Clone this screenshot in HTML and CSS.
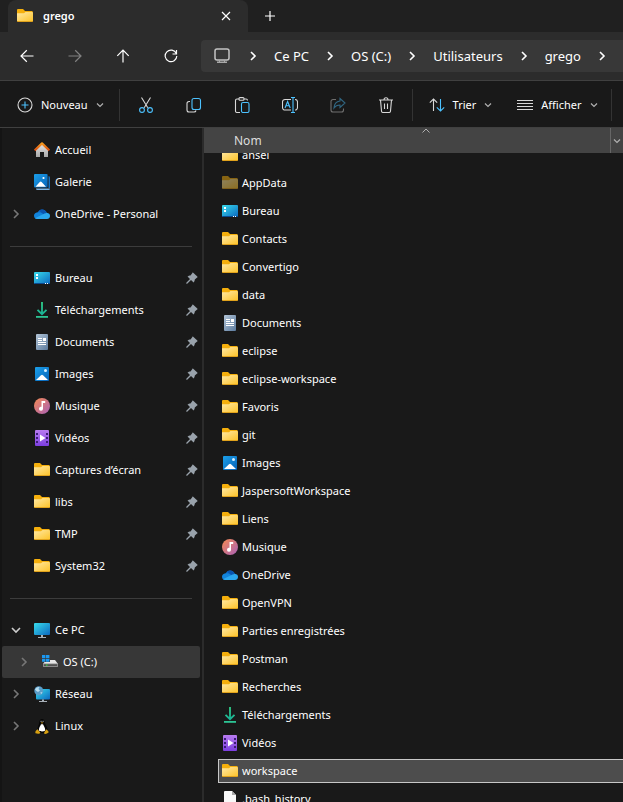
FILE: index.html
```html
<!DOCTYPE html>
<html lang="fr">
<head>
<meta charset="UTF-8">
<meta name="viewport" content="width=device-width, initial-scale=1.0">
<title>grego</title>
<link rel="stylesheet" href="styles.css">
</head>
<body>

<svg class="sprite" aria-hidden="true">
    <defs>
        <linearGradient id="gFolder" x1="0" y1="0" x2="1" y2="1"><stop offset="0" stop-color="#ffe9a6"/><stop offset="1" stop-color="#fdc42c"/></linearGradient>
        <linearGradient id="gDesk" x1="0" y1="0" x2="1" y2="1"><stop offset="0" stop-color="#38dcec"/><stop offset="1" stop-color="#0c68c0"/></linearGradient>
        <linearGradient id="gBlue" x1="0" y1="0" x2="1" y2="1"><stop offset="0" stop-color="#1ba0ea"/><stop offset="1" stop-color="#0763b8"/></linearGradient>
        <linearGradient id="gDown" x1="0" y1="0" x2="0" y2="16" gradientUnits="userSpaceOnUse"><stop offset="0" stop-color="#30d088"/><stop offset="1" stop-color="#12a89a"/></linearGradient>
        <linearGradient id="gDoc" x1="0" y1="0" x2="1" y2="1"><stop offset="0" stop-color="#b4c6d8"/><stop offset="1" stop-color="#5a7a9e"/></linearGradient>
        <linearGradient id="gMusic" x1="0" y1="0" x2="1" y2="1"><stop offset="0" stop-color="#f58a52"/><stop offset="1" stop-color="#a860b8"/></linearGradient>
        <linearGradient id="gVideo" x1="0" y1="0" x2="0" y2="1"><stop offset="0" stop-color="#b87cf0"/><stop offset="1" stop-color="#7c3ee0"/></linearGradient>
        <linearGradient id="gHome" x1="0" y1="0" x2="0" y2="1"><stop offset="0" stop-color="#e4e4e4"/><stop offset="1" stop-color="#a8a8a8"/></linearGradient>
        <linearGradient id="gRoof" x1="0" y1="0" x2="0" y2="1"><stop offset="0" stop-color="#f59a20"/><stop offset="1" stop-color="#d84c10"/></linearGradient>
    </defs>
    <symbol id="folder" viewBox="0 0 16 16">
        <path fill="#f5af0c" d="M0 2a1 1 0 0 1 1-1h5l2 2h7.500v10H0z"/>
        <path fill="url(#gFolder)" d="M0 5.300h7L8.500 4H15.200a.8.800 0 0 1 .8.800V13H0z"/>
        <path fill="#e0a21c" d="M0 13h16v.3a.7.700 0 0 1-.7.700H.7a.7.700 0 0 1-.7-.7z"/>
    </symbol>
    <symbol id="desktop" viewBox="0 0 16 16">
        <rect y="2" width="16" height="12" rx="1" fill="url(#gDesk)"/>
        <path fill="#0a4a90" d="M0 13h16a1 1 0 0 1-1 1H1a1 1 0 0 1-1-1z"/>
        <path fill="#fff" d="M2 4h2v2H2zM2 7h2v2H2zM11 13h1v1h-1zM13 13h1v1h-1z"/>
    </symbol>
    <symbol id="download" viewBox="0 0 16 16">
        <path fill="none" stroke="url(#gDown)" stroke-width="1.800" d="M8 0V12M3.500 7.800 8 12.200l4.500-4.400"/>
        <path fill="#2cc494" d="M2 14h12v1.800H2z"/>
    </symbol>
    <symbol id="document" viewBox="0 0 16 16">
        <rect x="2" width="12" height="16" rx="1" fill="url(#gDoc)"/>
        <path fill="#fff" d="M4 4h4v1H4zM4 6h4v1H4zM9 4h3v3H9zM4 8h8v1H4zM4 10h8v1H4z"/>
    </symbol>
    <symbol id="pictures" viewBox="0 0 16 16">
        <rect x="1" y="1" width="14" height="14" rx="1" fill="url(#gBlue)"/>
        <path fill="#fff" d="M2 14 7 9.300a1.400 1.400 0 0 1 2 0L14 14z"/>
        <circle cx="11.500" cy="4.500" r="1.500" fill="#d8f0ff"/>
    </symbol>
    <symbol id="gallery" viewBox="0 0 16 16">
        <path fill="#1473c4" d="M14.500 2a1.500 1.500 0 0 1 1.500 1.500V14h-1.500z"/>
        <path fill="#7ab4e4" d="M2 14.500h14A1.500 1.500 0 0 1 14.500 16h-11A1.500 1.500 0 0 1 2 14.500z"/>
        <rect width="13.600" height="13.600" rx="1" fill="url(#gBlue)"/>
        <path fill="#fff" d="M1.500 12.800 5.800 8a1.200 1.200 0 0 1 1.800 0l4.400 4.800z"/>
        <circle cx="9.500" cy="4" r="1.100" fill="#fff"/>
    </symbol>
    <symbol id="music" viewBox="0 0 16 16">
        <circle cx="8" cy="8" r="8" fill="url(#gMusic)"/>
        <path fill="#fff" d="M7.500 3h3.700v2H9v5.700a2 2 0 1 1-1.500-1.900z"/>
    </symbol>
    <symbol id="video" viewBox="0 0 16 16">
        <rect x="1" width="14" height="16" rx="1" fill="url(#gVideo)"/>
        <path fill="#3c1c78" d="M2 3h2v2H2zM2 7h2v2H2zM2 11h2v2H2zM12 3h2v2h-2zM12 7h2v2h-2zM12 11h2v2h-2z"/>
        <path fill="#fff" d="M6 4.500 11.500 8 6 11.500z"/>
    </symbol>
    <symbol id="home" viewBox="0 0 16 16">
        <path fill="url(#gHome)" d="M2 7.500 8 2l6 5.500V15H10V10H6v5H2z"/>
        <path fill="none" stroke="url(#gRoof)" stroke-width="2.200" stroke-linejoin="round" d="M.6 8.400 8 1.400l7.400 7"/>
    </symbol>
    <symbol id="onedrive" viewBox="0 0 16 16">
        <path fill="#0f6cc8" d="M3.600 6.300A5 5 0 0 1 12.700 6.800L8 10z"/>
        <path fill="#0a55b0" d="M5 4.400a5 5 0 0 1 7.700 2.400L9 8z"/>
        <path fill="#1284dc" d="M3.600 6.200C1.200 6.400 0 8 0 9.800 0 12 1.700 13 3.200 13L9.500 8.200C7.500 6.800 5.800 6 3.600 6.200z"/>
        <path fill="#2ba8f0" d="M1 12.200 9.500 8l3.200-1.200C15 7 16 8.500 16 10c0 1.800-1.400 3-3 3H3.200c-.9 0-1.600-.3-2.200-.8z"/>
    </symbol>
    <symbol id="pc" viewBox="0 0 16 16">
        <rect y="1" width="16" height="12" rx="1" fill="url(#gDesk)"/>
        <path fill="#a8b0b8" d="M7 13h2v2h3v1H4v-1h3z"/>
    </symbol>
    <symbol id="drive" viewBox="0 0 16 16">
        <path fill="#e6e6e6" d="M4 6h9l3 4H1z"/>
        <rect x="1" y="9.500" width="15" height="3.500" rx=".6" fill="#8a8a8a"/>
        <path fill="#505050" d="M2 10.300h13v1.700H2z"/>
        <path fill="#30d840" d="M4 10.600h1.500v1.200H4z"/>
        <path fill="#373737" d="M0 0h8v8H0z"/>
        <path fill="#1c98f0" d="M0 1h3.400v3H0zM4 1h3.400v3H4zM0 4.700h3.400v3H0zM4 4.700h3.400v3H4z"/>
    </symbol>
    <symbol id="network" viewBox="0 0 16 16">
        <rect x="2" y="3" width="14" height="10.500" rx="1" fill="url(#gDesk)"/>
        <path fill="#a8b0b8" d="M8 13.500h2V15h3v1H5v-1h3z"/>
        <circle cx="4.800" cy="4.800" r="4.500" fill="#5a9cc8"/>
        <path fill="#b8dcee" d="M1 3.500C2 1.500 4 .8 5.500 1L4.500 3 6 4.500 4 6 2.500 5zM6.500 6l2 .5L7 8.300z"/>
    </symbol>
    <symbol id="linux" viewBox="0 0 16 16">
        <path fill="#050505" d="M5.500 3a2.600 2.600 0 0 1 5 0c.2 3 3 5.500 3 8.500S11 15 8 15s-5-1-4.500-4S5.400 6 5.500 3z"/>
        <path fill="#fff" d="M7 6.200h2c1 2 2.400 4 2.200 6-.3 1.600-5.800 1.600-6.300 0C4.700 10 6.200 8 7 6.200z"/>
        <path fill="#888" d="M6.500 2.800h1.200V4H6.500zM8.500 2.800h1.200V4H8.500z"/>
        <path fill="#d8a010" d="M6.700 4.400h2.800L8 5.800zM3.500 11.200l2.800 3.300c0 1.300-2.500 1.700-4.800.8-.6-2 .6-2.500 2-4.100zM12.200 11.200c1 1 2.800 2 2.300 3.300-1.500 1.500-4.200 2-4.500.6z"/>
    </symbol>
    <symbol id="file" viewBox="0 0 16 16">
        <path fill="#f8f8f8" d="M2 1a1 1 0 0 1 1-1h7l4 4v12H2z"/>
        <path fill="#a8a8a8" d="M10 0l4 4h-4z"/>
    </symbol>
    <symbol id="pin" viewBox="0 0 12 12">
        <path fill="#99a2ab" d="M7.200.8 11.300 4.600c.5.500.2 1.200-.5 1.200L8.800 7.500C8.700 9 8.200 10 7.600 10.400L5 8 1.200 11.700H.3v-.9L4 7.100 1.500 4.600C2.200 3.900 3.400 3.500 4.500 3.500L6.200 1.200C6.300.5 6.800.4 7.200.8z"/>
    </symbol>
    <symbol id="right" viewBox="0 0 8 12">
        <path fill="none" stroke="currentColor" stroke-width="1.600" d="M2 2l4 4-4 4"/>
    </symbol>
    <symbol id="down" viewBox="0 0 8 8">
        <path fill="none" stroke="currentColor" stroke-width="1.200" d="M1 2.500l3 3 3-3"/>
    </symbol>
</svg>

<div class="window">
    <header class="tabs">
        <div class="tab">
            <svg class="icon"><use href="#folder"/></svg>
            <span class="tab-title">grego</span>
            <button type="button" class="tab-close" aria-label="Fermer l'onglet">
                <svg width="10" height="10" viewBox="0 0 10 10"><path d="M1 1l8 8M9 1l-8 8"/></svg>
            </button>
        </div>
        <button type="button" class="tab-new" aria-label="Nouvel onglet">
            <svg width="12" height="12" viewBox="0 0 12 12"><path d="M6 1v10M1 6h10"/></svg>
        </button>
    </header>

    <nav class="navbar">
        <button type="button" class="nav-button" aria-label="Précédent">
            <svg width="14" height="14" viewBox="0 0 14 14"><path d="M13.500 7H1M6.800 1.300 1 7l5.800 5.700"/></svg>
        </button>
        <button type="button" class="nav-button" aria-label="Suivant" disabled>
            <svg width="14" height="14" viewBox="0 0 14 14"><path d="M.5 7H13M7.200 1.300 13 7l-5.800 5.700"/></svg>
        </button>
        <button type="button" class="nav-button" aria-label="Dossier parent">
            <svg width="14" height="14" viewBox="0 0 14 14"><path d="M7 13.500V1M1.300 6.800 7 1l5.700 5.800"/></svg>
        </button>
        <button type="button" class="nav-button" aria-label="Actualiser">
            <svg width="14" height="14" viewBox="0 0 14 14"><path d="M12.300 4.500A5.800 5.800 0 1 0 12.800 7M12.500 1v4H8.500"/></svg>
        </button>
        <div class="address">
            <svg class="address-icon" viewBox="0 0 16 16"><rect x="1" y="1" width="14" height="11" rx="2" fill="none" stroke="#c4c4c4" stroke-width="1.500"/><path fill="#a8a8a8" d="M3 13.500h10V15H3zM5 12h1v2H5zM10 12h1v2h-1z"/></svg>
            <svg class="crumb-arrow"><use href="#right"/></svg>
            <a href="#">Ce PC</a>
            <svg class="crumb-arrow"><use href="#right"/></svg>
            <a href="#">OS (C:)</a>
            <svg class="crumb-arrow"><use href="#right"/></svg>
            <a href="#">Utilisateurs</a>
            <svg class="crumb-arrow"><use href="#right"/></svg>
            <a href="#">grego</a>
            <svg class="crumb-arrow"><use href="#right"/></svg>
        </div>
    </nav>

    <div class="toolbar">
        <button type="button" class="tool new">
            <svg class="icon" viewBox="0 0 16 16"><circle cx="8" cy="8" r="7"/><path class="accent" d="M8 4.500v7M4.500 8h7"/></svg>
            Nouveau
            <svg class="caret"><use href="#down"/></svg>
        </button>
        <div class="tool-icons">
            <button type="button" aria-label="Couper">
                <svg class="icon" viewBox="0 0 16 16"><path d="M3.500.5l6.300 10.300M12.500.5 6.200 10.800"/><circle class="accent" cx="4" cy="13" r="2.400"/><circle class="accent" cx="12" cy="13" r="2.400"/></svg>
            </button>
            <button type="button" aria-label="Copier">
                <svg class="icon" viewBox="0 0 16 16"><path d="M4 4.500H3a2 2 0 0 0-2 2V13a2 2 0 0 0 2 2h5a2 2 0 0 0 2-1.500"/><rect class="accent" x="6" y="1.500" width="8.500" height="11" rx="2"/></svg>
            </button>
            <button type="button" aria-label="Coller">
                <svg class="icon" viewBox="0 0 16 16"><path d="M5 2H3a1.500 1.500 0 0 0-1.500 1.500v10.500A1.500 1.500 0 0 0 3 15.500h3M10 2h2a1.500 1.500 0 0 1 1.500 1.500"/><rect x="5" y=".6" width="5" height="2.600" rx="1"/><rect class="accent" x="7.500" y="5.500" width="7.500" height="10" rx="1.500"/></svg>
            </button>
            <button type="button" aria-label="Renommer">
                <svg class="icon" viewBox="0 0 16 16"><path d="M9 2.500H3a2.500 2.500 0 0 0-2.500 2.500v5.500A2.500 2.500 0 0 0 3 13H9M13 2.500a2.500 2.500 0 0 1 2.500 2.500v5.500A2.500 2.500 0 0 1 13 13"/><path class="accent" d="M11 .5v15M9 .5h4M9 15.500h4M3 11l2.600-6.500L8.200 11M4 8.800h3.200"/></svg>
            </button>
            <button type="button" aria-label="Partager" disabled>
                <svg class="icon" viewBox="0 0 16 16"><path d="M6 2.500H3A2 2 0 0 0 1 4.500V13a2 2 0 0 0 2 2h8.500a2 2 0 0 0 2-2v-1.500"/><path class="accent" d="M10 1.500 15 6l-5 4.500V8C7 8 5.300 9 4 11c.2-4 2.500-6.500 6-7z"/></svg>
            </button>
            <button type="button" aria-label="Supprimer">
                <svg class="icon" viewBox="0 0 16 16"><path d="M1 3h14M6 2.800a2 2 0 0 1 4 0M2.500 3l1 11a1.500 1.500 0 0 0 1.500 1.500h6a1.500 1.500 0 0 0 1.500-1.500l1-11M6.500 6.500v5.500M9.500 6.500v5.500"/></svg>
            </button>
        </div>
        <button type="button" class="tool sort">
            <svg class="icon" viewBox="0 0 16 16"><path d="M4.500 14V2M.8 5.700 4.500 2l3.700 3.700"/><path class="accent" d="M11.500 2v12M7.800 10.300l3.700 3.700 3.700-3.700"/></svg>
            Trier
            <svg class="caret"><use href="#down"/></svg>
        </button>
        <button type="button" class="tool view">
            <svg class="icon" viewBox="0 0 16 16"><path d="M0 3.500h16M0 6.500h16M0 9.500h16M0 12.500h16"/></svg>
            Afficher
            <svg class="caret"><use href="#down"/></svg>
        </button>
    </div>

    <div class="content">
        <aside class="sidebar">
            <ul>
                <li class="row leaf"><a href="#"><svg class="icon"><use href="#home"/></svg>Accueil</a></li>
                <li class="row leaf"><a href="#"><svg class="icon"><use href="#gallery"/></svg>Galerie</a></li>
                <li class="row"><button type="button" class="expand" aria-label="Développer"><svg><use href="#right"/></svg></button><a href="#"><svg class="icon"><use href="#onedrive"/></svg>OneDrive - Personal</a></li>
            </ul>
            <hr>
            <ul>
                <li class="row leaf"><a href="#"><svg class="icon"><use href="#desktop"/></svg>Bureau</a><svg class="pin"><use href="#pin"/></svg></li>
                <li class="row leaf"><a href="#"><svg class="icon"><use href="#download"/></svg>Téléchargements</a><svg class="pin"><use href="#pin"/></svg></li>
                <li class="row leaf"><a href="#"><svg class="icon"><use href="#document"/></svg>Documents</a><svg class="pin"><use href="#pin"/></svg></li>
                <li class="row leaf"><a href="#"><svg class="icon"><use href="#pictures"/></svg>Images</a><svg class="pin"><use href="#pin"/></svg></li>
                <li class="row leaf"><a href="#"><svg class="icon"><use href="#music"/></svg>Musique</a><svg class="pin"><use href="#pin"/></svg></li>
                <li class="row leaf"><a href="#"><svg class="icon"><use href="#video"/></svg>Vidéos</a><svg class="pin"><use href="#pin"/></svg></li>
                <li class="row leaf"><a href="#"><svg class="icon"><use href="#folder"/></svg>Captures d’écran</a><svg class="pin"><use href="#pin"/></svg></li>
                <li class="row leaf"><a href="#"><svg class="icon"><use href="#folder"/></svg>libs</a><svg class="pin"><use href="#pin"/></svg></li>
                <li class="row leaf"><a href="#"><svg class="icon"><use href="#folder"/></svg>TMP</a><svg class="pin"><use href="#pin"/></svg></li>
                <li class="row leaf"><a href="#"><svg class="icon"><use href="#folder"/></svg>System32</a><svg class="pin"><use href="#pin"/></svg></li>
            </ul>
            <hr>
            <ul>
                <li class="row"><button type="button" class="expand open" aria-label="Réduire"><svg><use href="#right"/></svg></button><a href="#"><svg class="icon"><use href="#pc"/></svg>Ce PC</a></li>
                <li class="row child selected"><button type="button" class="expand" aria-label="Développer"><svg><use href="#right"/></svg></button><a href="#"><svg class="icon"><use href="#drive"/></svg>OS (C:)</a></li>
                <li class="row"><button type="button" class="expand" aria-label="Développer"><svg><use href="#right"/></svg></button><a href="#"><svg class="icon"><use href="#network"/></svg>Réseau</a></li>
                <li class="row"><button type="button" class="expand" aria-label="Développer"><svg><use href="#right"/></svg></button><a href="#"><svg class="icon"><use href="#linux"/></svg>Linux</a></li>
            </ul>
        </aside>

        <main class="main">
            <div class="columns">
                <button type="button" class="column-name">Nom</button>
                <svg class="sort-mark" viewBox="0 0 8 5"><path d="M.5 4.500 4 1l3.500 3.500"/></svg>
                <button type="button" class="column-menu" aria-label="Filtrer"><svg class="caret"><use href="#down"/></svg></button>
            </div>
            <div class="files">
                <ul>
                    <li><a href="#"><svg class="icon"><use href="#folder"/></svg>ansel</a></li>
                    <li class="hidden-item"><a href="#"><svg class="icon"><use href="#folder"/></svg>AppData</a></li>
                    <li><a href="#"><svg class="icon"><use href="#desktop"/></svg>Bureau</a></li>
                    <li><a href="#"><svg class="icon"><use href="#folder"/></svg>Contacts</a></li>
                    <li><a href="#"><svg class="icon"><use href="#folder"/></svg>Convertigo</a></li>
                    <li><a href="#"><svg class="icon"><use href="#folder"/></svg>data</a></li>
                    <li><a href="#"><svg class="icon"><use href="#document"/></svg>Documents</a></li>
                    <li><a href="#"><svg class="icon"><use href="#folder"/></svg>eclipse</a></li>
                    <li><a href="#"><svg class="icon"><use href="#folder"/></svg>eclipse-workspace</a></li>
                    <li><a href="#"><svg class="icon"><use href="#folder"/></svg>Favoris</a></li>
                    <li><a href="#"><svg class="icon"><use href="#folder"/></svg>git</a></li>
                    <li><a href="#"><svg class="icon"><use href="#pictures"/></svg>Images</a></li>
                    <li><a href="#"><svg class="icon"><use href="#folder"/></svg>JaspersoftWorkspace</a></li>
                    <li><a href="#"><svg class="icon"><use href="#folder"/></svg>Liens</a></li>
                    <li><a href="#"><svg class="icon"><use href="#music"/></svg>Musique</a></li>
                    <li><a href="#"><svg class="icon"><use href="#onedrive"/></svg>OneDrive</a></li>
                    <li><a href="#"><svg class="icon"><use href="#folder"/></svg>OpenVPN</a></li>
                    <li><a href="#"><svg class="icon"><use href="#folder"/></svg>Parties enregistrées</a></li>
                    <li><a href="#"><svg class="icon"><use href="#folder"/></svg>Postman</a></li>
                    <li><a href="#"><svg class="icon"><use href="#folder"/></svg>Recherches</a></li>
                    <li><a href="#"><svg class="icon"><use href="#download"/></svg>Téléchargements</a></li>
                    <li><a href="#"><svg class="icon"><use href="#video"/></svg>Vidéos</a></li>
                    <li class="selected"><a href="#"><svg class="icon"><use href="#folder"/></svg>workspace</a></li>
                    <li><a href="#"><svg class="icon"><use href="#file"/></svg>.bash_history</a></li>
                </ul>
            </div>
        </main>
    </div>
</div>

</body>
</html>
```
FILE: styles.css
```css
* {
    box-sizing: border-box;
}

body {
    margin: 0;
    background-color: #191919;
    color: #fff;
    font-family: "Noto Sans", "Open Sans", sans-serif;
    font-size: 11px;
    line-height: 16px;
}

button {
    display: flex;
    align-items: center;
    justify-content: center;
    padding: 0;
    border: none;
    background: none;
    color: inherit;
    font: inherit;
}

a {
    color: inherit;
    text-decoration: none;
}

ul {
    list-style: none;
    margin: 0;
    padding: 0;
}

svg {
    flex: none;
}

.sprite {
    display: block;
    width: 0;
    height: 0;
}

.icon {
    width: 16px;
    height: 16px;
}

.caret {
    width: 8px;
    height: 8px;
    color: #b0b0b0;
}

.window {
    display: flex;
    flex-direction: column;
    height: 100vh;
    overflow: hidden;
}

/* Tabs */
.tabs {
    display: flex;
    height: 32px;
    padding-left: 8px;
    background-color: #202020;
}

.tab {
    display: flex;
    align-items: center;
    width: 240px;
    padding: 0 12px 0 9px;
    gap: 10px;
    background-color: #2c2c2c;
    border-radius: 8px 8px 0 0;
}

.tab-title {
    flex: 1;
    font-weight: 600;
}

.tab-close,
.tab-new {
    width: 20px;
}

.tab-new {
    margin-left: 12px;
}

.tabs button path,
.nav-button path {
    fill: none;
    stroke: #fff;
    stroke-width: 1.2;
}

/* Navigation */
.navbar {
    display: flex;
    align-items: center;
    height: 49px;
    padding-left: 3px;
    background-color: #2c2c2c;
    border-bottom: 1px solid #404040;
}

.nav-button {
    width: 48px;
    height: 32px;
}

.nav-button:disabled {
    opacity: 0.4;
}

.address {
    display: flex;
    flex: 1;
    align-items: center;
    gap: 17px;
    height: 32px;
    margin-left: 6px;
    padding-left: 13px;
    overflow: hidden;
    background-color: #383838;
    border-radius: 4px 0 0 4px;
    font-size: 13px;
    white-space: nowrap;
}

.address-icon {
    width: 16px;
    height: 16px;
    margin-right: 2px;
}

.crumb-arrow {
    width: 8px;
    height: 12px;
}

/* Toolbar */
.toolbar {
    display: flex;
    align-items: center;
    height: 47px;
    padding-top: 2px;
    border-bottom: 1px solid #404040;
}

.toolbar .icon * {
    fill: none;
    stroke: #d8d8d8;
    stroke-width: 1.1;
}

.toolbar .icon .accent {
    stroke: #4cc2ff;
}

.toolbar button:disabled {
    opacity: 0.45;
}

.tool {
    height: 32px;
    gap: 8px;
    border-right: 1px solid #333;
}

.new {
    padding: 0 15px 0 17px;
}

.sort {
    padding-left: 16px;
    border-right: none;
}

.view {
    margin-left: 25px;
    padding-right: 13px;
}

.tool-icons {
    display: flex;
    padding: 0 2px;
    height: 32px;
    border-right: 1px solid #333;
}

.tool-icons button {
    width: 48px;
}

/* Sidebar */
.content {
    display: flex;
    flex: 1;
    min-height: 0;
}

.sidebar {
    flex: none;
    width: 204px;
    padding-top: 6px;
    border-left: 2px solid #141414;
    border-right: 2px solid #2b2b2b;
}

.row {
    display: flex;
    align-items: center;
    height: 32px;
    margin-right: 2px;
    padding-right: 2px;
}

.row a {
    display: flex;
    flex: 1;
    align-items: center;
    gap: 5px;
}

.leaf {
    padding-left: 32px;
}

.child {
    padding-left: 8px;
}

.sidebar .selected {
    background-color: #373737;
    border-radius: 2px;
}

.expand {
    width: 28px;
    height: 32px;
    margin-right: 4px;
    color: #777;
}

.expand svg {
    width: 8px;
    height: 12px;
}

.expand.open {
    color: #ccc;
}

.expand.open svg {
    transform: rotate(90deg);
}

.pin {
    width: 12px;
    height: 12px;
}

.sidebar hr {
    height: 1px;
    margin: 16px 10px 15px 8px;
    border: none;
    background-color: #3c3c3c;
}

/* File list */
.main {
    display: flex;
    flex: 1;
    flex-direction: column;
    min-width: 0;
}

.columns {
    position: relative;
    display: flex;
    flex: none;
    height: 25px;
    background-color: #444;
    color: #ddd;
    font-size: 12px;
}

.column-name {
    flex: 1;
    justify-content: flex-start;
    padding-left: 30px;
    border-right: 1px solid #666;
}

.column-menu {
    width: 12px;
}

.sort-mark {
    position: absolute;
    top: 0;
    left: 52%;
    width: 8px;
    height: 5px;
    fill: none;
    stroke: #b0b0b0;
}

.files {
    flex: 1;
    min-height: 0;
    overflow: hidden;
}

/* the list is scrolled a little under the column header */
.files ul {
    margin-top: -10px;
}

.files li {
    height: 24px;
    margin: 0 0 4px 14px;
    padding-left: 4px;
}

.files li a {
    display: flex;
    align-items: center;
    gap: 4px;
    height: 24px;
    line-height: 18px;
}

.files .hidden-item .icon {
    opacity: 0.5;
}

.files .selected {
    padding-left: 3px;
    background-color: #4d4d4d;
    border: 1px solid #c8c8c8;
    border-right: none;
}

.files .selected a {
    height: 22px;
}
```
